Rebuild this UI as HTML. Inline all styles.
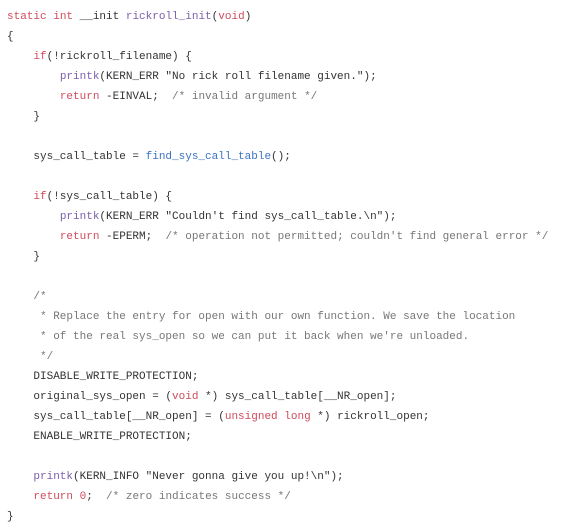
<!DOCTYPE html>
<html><head><meta charset="utf-8"><style>
html,body{margin:0;padding:0;background:#fff;width:570px;height:528px;overflow:hidden}
pre{margin:0;position:absolute;left:7px;top:7px;font-family:"Liberation Mono","DejaVu Sans Mono",monospace;font-size:11px;line-height:20px;color:#333}
.k{color:#d14a5c}.f{color:#7b5fae}.b{color:#3b72c4}.c{color:#777}
</style></head><body><pre><span class="k">static</span> <span class="k">int</span> __init <span class="f">rickroll_init</span>(<span class="k">void</span>)
{
    <span class="k">if</span>(!rickroll_filename) {
        <span class="f">printk</span>(KERN_ERR "No rick roll filename given.");
        <span class="k">return</span> -EINVAL;  <span class="c">/* invalid argument */</span>
    }

    sys_call_table = <span class="b">find_sys_call_table</span>();

    <span class="k">if</span>(!sys_call_table) {
        <span class="f">printk</span>(KERN_ERR "Couldn't find sys_call_table.\n");
        <span class="k">return</span> -EPERM;  <span class="c">/* operation not permitted; couldn't find general error */</span>
    }

    <span class="c">/*
     * Replace the entry for open with our own function. We save the location
     * of the real sys_open so we can put it back when we're unloaded.
     */</span>
    DISABLE_WRITE_PROTECTION;
    original_sys_open = (<span class="k">void</span> *) sys_call_table[__NR_open];
    sys_call_table[__NR_open] = (<span class="k">unsigned</span> <span class="k">long</span> *) rickroll_open;
    ENABLE_WRITE_PROTECTION;

    <span class="f">printk</span>(KERN_INFO "Never gonna give you up!\n");
    <span class="k">return</span> <span class="k">0</span>;  <span class="c">/* zero indicates success */</span>
}</pre></body></html>
